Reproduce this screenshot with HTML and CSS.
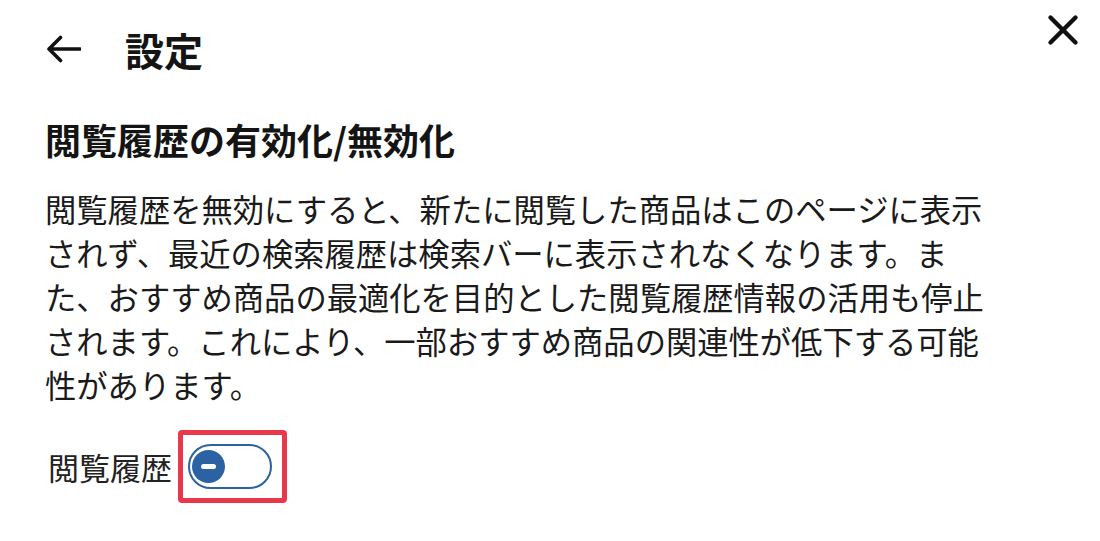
FILE: index.html
```html
<!DOCTYPE html>
<html lang="ja">
<head>
<meta charset="utf-8">
<title>設定</title>
<link rel="stylesheet" href="styles.css">
</head>
<body>
<div class="page">
  <header class="header">
    <button class="icon-btn back" aria-label="戻る">
      <svg width="36" height="28" viewBox="0 0 36 28" aria-hidden="true">
        <path d="M35 14 H4 M15.5 2.5 L4 14 L15.5 25.5" fill="none" stroke="#111" stroke-width="3.6" stroke-linecap="round" stroke-linejoin="round"/>
      </svg>
    </button>
    <h1 class="title">設定</h1>
    <button class="icon-btn close" aria-label="閉じる">
      <svg width="32" height="32" viewBox="0 0 32 32" aria-hidden="true">
        <path d="M3.5 3.5 L28.5 28.5 M28.5 3.5 L3.5 28.5" fill="none" stroke="#111" stroke-width="4.4" stroke-linecap="round"/>
      </svg>
    </button>
  </header>

  <h2 class="section-title">閲覧履歴の有効化/無効化</h2>
  <p class="desc">閲覧履歴を無効にすると、新たに閲覧した商品はこのページに表示されず、最近の検索履歴は検索バーに表示されなくなります。また、おすすめ商品の最適化を目的とした閲覧履歴情報の活用も停止されます。これにより、一部おすすめ商品の関連性が低下する可能性があります。</p>

  <div class="toggle-row">
    <span class="toggle-label">閲覧履歴</span>
    <div class="highlight">
      <div class="switch" role="switch" aria-checked="false">
        <span class="knob"><span class="minus"></span></span>
      </div>
    </div>
  </div>
</div>
</body>
</html>
```

FILE: styles.css
```css
* { box-sizing: border-box; }

html, body {
  margin: 0;
  padding: 0;
  background: #ffffff;
}

body {
  font-family: "Noto Sans CJK JP", "Noto Sans", sans-serif;
  color: #141414;
}

.page {
  padding: 0 21px 0 45px;
}

.header {
  display: flex;
  align-items: center;
  height: 98px;
}

.icon-btn {
  background: none;
  border: 0;
  padding: 0;
  margin: 0;
  display: flex;
  align-items: center;
  justify-content: center;
  cursor: pointer;
}

.back {
  width: 36px;
  height: 28px;
  margin-right: 44px;
}

.title {
  margin: 0;
  font-size: 39px;
  font-weight: 700;
  line-height: 1;
  color: #141414;
}

.close {
  margin-left: auto;
  align-self: flex-start;
  margin-top: 14px;
  width: 32px;
  height: 32px;
}

.section-title {
  margin: 19px 0 0 0;
  font-size: 36px;
  font-weight: 700;
  line-height: 44px;
  color: #141414;
}

.desc {
  margin: 26px 0 0 0;
  max-width: 952px;
  font-size: 31.3px;
  line-height: 44px;
  font-weight: 400;
  color: #1a1a1a;
}

.toggle-row {
  display: flex;
  align-items: center;
  margin-top: 23px;
}

.toggle-label {
  font-size: 31px;
  line-height: 44px;
  margin-left: 3px;
  margin-right: 6px;
  color: #222;
}

.highlight {
  border: 5px solid #e8394b;
  border-radius: 4px;
  padding: 9px 10px 9px 5px;
  display: flex;
}

.switch {
  width: 84px;
  height: 45px;
  border: 2px solid #2a62a3;
  border-radius: 23px;
  padding: 3px 2px;
  display: flex;
  align-items: center;
  background: #fff;
}

.knob {
  width: 33px;
  height: 33px;
  border-radius: 50%;
  background: #2a62a3;
  display: flex;
  align-items: center;
  justify-content: center;
}

.minus {
  width: 15px;
  height: 5px;
  border-radius: 3px;
  background: #ffffff;
}
```
